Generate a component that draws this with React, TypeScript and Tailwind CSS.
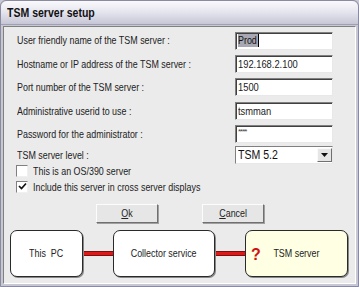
import React from "react"

const fields = [
  { label: "User friendly name of the TSM server :", value: "Prod", selected: true },
  { label: "Hostname or IP address of the TSM server :", value: "192.168.2.100" },
  { label: "Port number of the TSM server :", value: "1500" },
  { label: "Administrative userid to use :", value: "tsmman" },
  { label: "Password for the administrator :", value: "****", password: true },
]

// the screenshot is a squeezed Tahoma, so the text gets narrowed
function T({ children, className = "", center }: { children: React.ReactNode; className?: string; center?: boolean }) {
  return (
    <span className={`inline-block whitespace-nowrap scale-x-[0.81] ${center ? "origin-center" : "origin-left"} ${className}`}>
      {children}
    </span>
  )
}

function Field({ label, value, selected, password }: { label: string; value: string; selected?: boolean; password?: boolean }) {
  return (
    <div className="flex h-[23.4px] items-center">
      <div className="w-[231px] pl-[13px] text-[11px] text-[#222]"><T>{label}</T></div>
      <div className="flex h-[18px] w-[98px] items-center border border-t-[#808080] border-l-[#808080] border-r-[#e8e8e8] border-b-[#e8e8e8] bg-white pl-[2px] shadow-[inset_1px_1px_0_#404040]">
        {selected ? (
          <span className="flex items-center">
            <span className="w-[20px] overflow-hidden bg-[#a8a8b4] text-[11px] leading-[13px] text-[#111]"><T>{value}</T></span>
            <span className="h-[13px] w-px bg-black" />
          </span>
        ) : password ? (
          <span className="-mt-[4px] text-[8px] tracking-[-1px] text-[#444]">{value}</span>
        ) : (
          <span className="text-[11px] text-[#222]"><T className="scale-x-[0.85]">{value}</T></span>
        )}
      </div>
    </div>
  )
}

function Checkbox({ checked, label }: { checked?: boolean; label: string }) {
  return (
    <div className="flex h-[16px] items-center pl-[12px]">
      <div className="flex h-[12px] w-[12px] items-center justify-center border border-t-[#808080] border-l-[#808080] border-r-[#f0f0f0] border-b-[#f0f0f0] bg-white">
        {checked && (
          <svg width="9" height="9" viewBox="0 0 9 9">
            <path d="M1 4 L3.5 6.5 L8 1.5" stroke="#111" strokeWidth="1.7" fill="none" />
          </svg>
        )}
      </div>
      <span className="ml-[5px] text-[11px] text-[#222]"><T>{label}</T></span>
    </div>
  )
}

function Btn({ ul, rest }: { ul: string; rest: string }) {
  return (
    <div className="flex h-[19px] w-[62px] items-center justify-center border border-t-[#fcfcfc] border-l-[#fcfcfc] border-r-[#707070] border-b-[#707070] bg-[#e6e6e6] text-[11px] text-[#222] shadow-[1px_1px_0_#a0a0a0]">
      <T center><span className="underline">{ul}</span>{rest}</T>
    </div>
  )
}

function Box({ children, yellow, w }: { children: React.ReactNode; yellow?: boolean; w: string }) {
  return (
    <div className={`relative flex h-[47px] items-center justify-center rounded-[7px] border border-[#2a2a2a] text-[11px] text-[#222] shadow-[1px_1px_0_#888] ${w} ${yellow ? "bg-[#ffffe3]" : "bg-white"}`}>
      {children}
    </div>
  )
}

function Link() {
  return (
    <div className="flex h-[5px] w-[30px] flex-col">
      <div className="h-px bg-[#7a1010]" />
      <div className="h-[3px] bg-[#e01818]" />
      <div className="h-px bg-[#7a1010]" />
    </div>
  )
}

export default function App() {
  return (
    <div className="h-[287px] w-[359px] overflow-hidden bg-[#c8c8d4] font-['Liberation_Sans',Arial,sans-serif]">
      <div className="flex h-full flex-col rounded-t-[6px] border border-[#8a8aa0]">
        {/* Title bar */}
        <div className="flex h-[24px] items-center rounded-t-[6px] border-b border-[#a0a0b4] bg-gradient-to-b from-[#fafafc] via-[#e4e4ee] to-[#c6c6d6] pl-[6px]">
          <span className="text-[13px] font-bold text-[#111]"><T>TSM server setup</T></span>
        </div>
        {/* Panel */}
        <div className="mx-[2px] mb-[2px] mt-[1px] flex flex-1 flex-col border border-t-[#808080] border-l-[#808080] border-r-[#ffffff] border-b-[#ffffff] bg-[#ebebeb] pt-[2px]">
          {fields.map((f) => (
            <Field key={f.label} {...f} />
          ))}
          <div className="flex h-[19px] items-center">
            <div className="w-[231px] pl-[13px] text-[11px] text-[#222]"><T>TSM server level :</T></div>
            <div className="flex h-[18px] w-[98px] items-center justify-between border border-t-[#808080] border-l-[#808080] border-r-[#e8e8e8] border-b-[#e8e8e8] bg-white pl-[2px]">
              <span className="text-[12px] text-[#111]"><T className="scale-x-[0.88]">TSM 5.2</T></span>
              <div className="flex h-[14px] w-[15px] items-center justify-center border border-t-[#fafafa] border-l-[#fafafa] border-r-[#707070] border-b-[#707070] bg-[#e6e6e6]">
                <svg width="7" height="4" viewBox="0 0 7 4">
                  <path d="M0 0 H7 L3.5 4 Z" fill="#111" />
                </svg>
              </div>
            </div>
          </div>
          <div className="-mt-[2px]">
            <Checkbox label="This is an OS/390 server" />
            <Checkbox checked label="Include this server in cross server displays" />
          </div>
          <div className="mt-[9px] flex gap-[44px] pl-[92px]">
            <Btn ul="O" rest="k" />
            <Btn ul="C" rest="ancel" />
          </div>
          <div className="mt-[7px] flex items-center pl-[6px]">
            <Box w="w-[73px]"><T center>This&nbsp; PC</T></Box>
            <Link />
            <Box w="w-[102px]"><T center>Collector service</T></Box>
            <Link />
            <Box w="w-[103px]" yellow>
              <span className="absolute left-[5px] top-[12px] text-[16px] font-bold text-[#d01010]">?</span>
              <T center>TSM server</T>
            </Box>
          </div>
        </div>
      </div>
    </div>
  )
}
